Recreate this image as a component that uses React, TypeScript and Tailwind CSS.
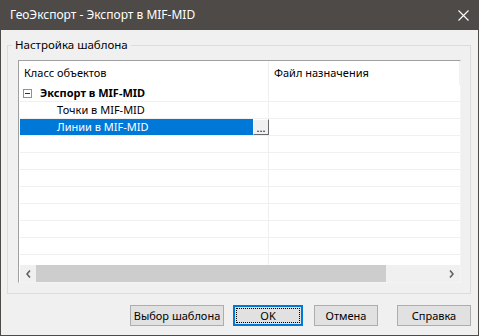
import React from "react";

function Chevron({ dir }: { dir: "left" | "right" }) {
  return (
    <svg width="5" height="8" viewBox="0 0 5 8">
      {dir === "left" ? (
        <path d="M4 0.5 L1 4 L4 7.5" fill="none" stroke="#606060" strokeWidth="1.6" />
      ) : (
        <path d="M1 0.5 L4 4 L1 7.5" fill="none" stroke="#606060" strokeWidth="1.6" />
      )}
    </svg>
  );
}

function Btn({ label, w, focused, className }: { label: string; w: string; focused?: boolean; className?: string }) {
  return (
    <div
      className={
        "relative h-[21px] flex items-center justify-center whitespace-nowrap bg-[#e1e1e1] text-black " +
        (focused ? "border-2 border-[#0078d7] " : "border border-[#adadad] ") +
        w +
        " " +
        (className ?? "")
      }
    >
      {focused && <span className="absolute inset-[1px] border border-dotted border-black" />}
      <span className="relative leading-none">{label}</span>
    </div>
  );
}

export default function App() {
  const emptyRows = Array.from({ length: 10 });
  return (
    <div className="w-[479px] h-[336px] flex flex-col bg-[#f0f0f0] font-['Noto_Sans',sans-serif] text-[11px] text-black overflow-hidden">
      <div className="h-[30px] shrink-0 bg-[#4d4a48] flex items-center pl-[10px] text-white text-[12px]">
        <span>ГеоЭкспорт - Экспорт в MIF-MID</span>
        <svg className="ml-auto mr-[10px]" width="11" height="11" viewBox="0 0 11 11">
          <path d="M0.5 0.5 L10.5 10.5 M10.5 0.5 L0.5 10.5" stroke="#ffffff" strokeWidth="1.1" />
        </svg>
      </div>
      <div className="flex-1 flex flex-col border-x border-b border-[#4d4a48] pl-[6px] pr-[7px] pt-[7px] pb-[9px] min-h-0">
        <fieldset className="flex-1 flex flex-col min-h-0 border border-[#dcdcdc] pl-[10px] pr-[9px] pt-[7px] pb-[10px]">
          <legend className="ml-[-6px] px-[3px] leading-[16px] text-[11.5px]">Настройка шаблона</legend>
          <div className="flex-1 flex flex-col min-h-0 bg-white border-l border-t border-[#a0a0a0] border-r border-b border-r-[#f4f4f4] border-b-[#f4f4f4] pl-[1px]">
            <div className="h-[24px] shrink-0 flex">
              <div className="w-[249px] border-r border-[#f0f0f0] pl-[4px] flex items-center">Класс объектов</div>
              <div className="flex-1 pl-[5px] flex items-center border-r border-[#f0f0f0]">Файл назначения</div>
            </div>
            <div className="flex-1 min-h-0 overflow-hidden flex flex-col">
              <div className="h-[17px] shrink-0 flex border-b border-[#f0f0f0]">
                <div className="w-[249px] border-r border-[#f0f0f0] flex items-center pl-[3px]">
                  <div className="w-[9px] h-[9px] border border-[#919191] flex items-center justify-center">
                    <div className="w-[5px] h-[1px] bg-[#333]" />
                  </div>
                  <span className="ml-[8px] font-bold">Экспорт в MIF-MID</span>
                </div>
                <div className="flex-1" />
              </div>
              <div className="h-[17px] shrink-0 flex border-b border-[#f0f0f0]">
                <div className="w-[249px] border-r border-[#f0f0f0] flex items-center pl-[37px]">Точки в MIF-MID</div>
                <div className="flex-1" />
              </div>
              <div className="h-[17px] shrink-0 flex border-b border-[#f0f0f0]">
                <div className="w-[249px] flex">
                  <div className="flex-1 bg-[#0078d7] text-white flex items-center pl-[37px]">Линии в MIF-MID</div>
                  <div className="w-[16px] bg-[#f0f0f0] border-t border-l border-white border-r border-b border-r-[#696969] border-b-[#696969] flex items-end justify-center leading-[12px] text-[11px]">
                    ...
                  </div>
                </div>
                <div className="flex-1" />
              </div>
              {emptyRows.map((_, i) => (
                <div key={i} className="h-[17px] shrink-0 flex border-b border-[#f0f0f0]">
                  <div className="w-[249px] border-r border-[#f0f0f0]" />
                  <div className="flex-1" />
                </div>
              ))}
            </div>
            <div className="h-[17px] shrink-0 flex bg-[#f0f0f0]">
              <div className="w-[16px] flex items-center justify-center">
                <Chevron dir="left" />
              </div>
              <div className="flex-1 flex">
                <div className="w-[350px] bg-[#cdcdcd]" />
              </div>
              <div className="w-[17px] flex items-center justify-center">
                <Chevron dir="right" />
              </div>
            </div>
          </div>
        </fieldset>
        <div className="mt-[11px] flex justify-end shrink-0">
          <Btn label="Выбор шаблона" w="w-[94px]" />
          <Btn label="OK" w="w-[70px]" focused className="ml-[9px]" />
          <Btn label="Отмена" w="w-[64px]" className="ml-[11px]" />
          <Btn label="Справка" w="w-[74px]" className="ml-[19px]" />
        </div>
      </div>
    </div>
  );
}
